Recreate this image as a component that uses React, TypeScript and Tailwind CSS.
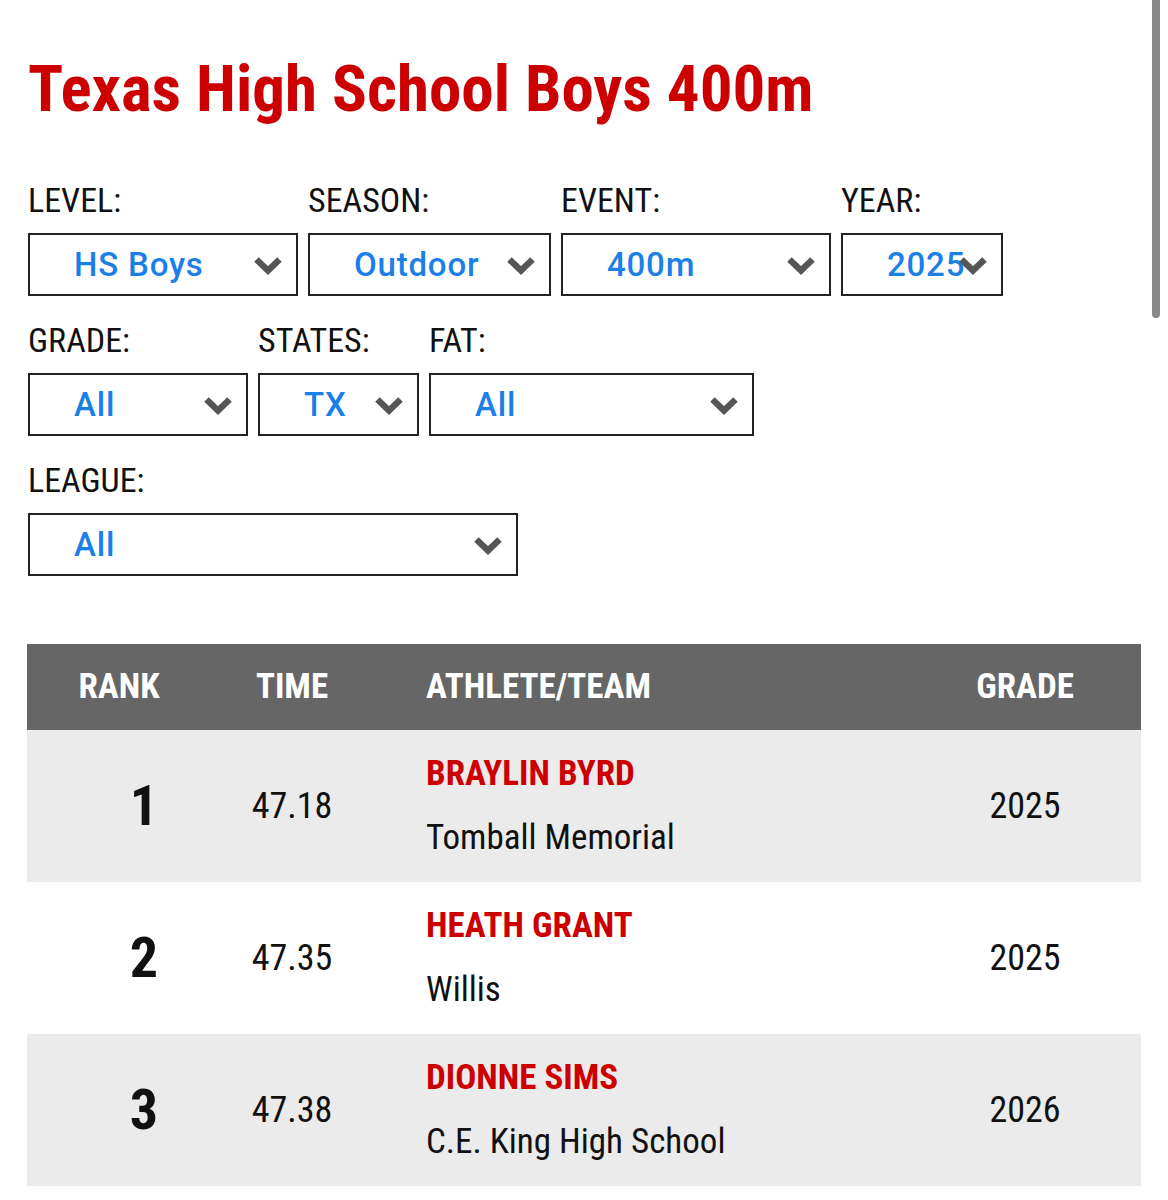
const rows = [
  { rank: 1, time: "47.18", name: "BRAYLIN BYRD", team: "Tomball Memorial", grade: "2025", shaded: true },
  { rank: 2, time: "47.35", name: "HEATH GRANT", team: "Willis", grade: "2025", shaded: false },
  { rank: 3, time: "47.38", name: "DIONNE SIMS", team: "C.E. King High School", grade: "2026", shaded: true },
];

function Chevron() {
  return (
    <svg
      viewBox="0 0 30 20"
      className="absolute right-[13px] top-1/2 h-[20px] w-[30px] -translate-y-1/2"
      aria-hidden
    >
      <path d="M3.5 4.5 L15 15.5 L26.5 4.5" fill="none" stroke="#555555" strokeWidth="6.5" strokeLinejoin="miter" />
    </svg>
  );
}

function Field({ label, value, width }: { label: string; value: string; width: string }) {
  return (
    <div className={`flex flex-col ${width}`}>
      <span className="text-[34px] font-normal leading-[40px] text-[#111]">{label}</span>
      <div className="relative mt-[13px] flex h-[63px] items-center border-[2.5px] border-[#222] bg-white pl-[44px]">
        <span className="font-['Roboto',sans-serif] text-[33px] font-medium tracking-[0.8px] text-[#1a7fe8] [font-stretch:100%]">
          {value}
        </span>
        <Chevron />
      </div>
    </div>
  );
}

export default function App() {
  return (
    <div className="relative min-h-[1200px] bg-white font-['Roboto_Condensed','Roboto',sans-serif] [font-stretch:75%]">
      <div className="absolute right-[8px] top-0 h-[318px] w-[8px] rounded-b-full bg-[#888888]" />

      <main className="px-[27px] pt-[57px]">
        <h1 className="pl-px text-[65px] font-bold leading-none text-[#cc0000]">
          Texas High School Boys 400m
        </h1>

        <div className="mt-[58px] flex flex-col gap-[24px] pl-px">
          <div className="flex gap-[10px]">
            <Field label="LEVEL:" value="HS Boys" width="w-[270px]" />
            <Field label="SEASON:" value="Outdoor" width="w-[243px]" />
            <Field label="EVENT:" value="400m" width="w-[270px]" />
            <Field label="YEAR:" value="2025" width="w-[162px]" />
          </div>
          <div className="flex gap-[10px]">
            <Field label="GRADE:" value="All" width="w-[220px]" />
            <Field label="STATES:" value="TX" width="w-[161px]" />
            <Field label="FAT:" value="All" width="w-[325px]" />
          </div>
          <div className="flex">
            <Field label="LEAGUE:" value="All" width="w-[490px]" />
          </div>
        </div>

        <section className="mt-[68px]">
          <div className="grid h-[86px] grid-cols-[184px_162px_1fr_232px] items-center bg-[#666666] text-[35px] font-bold text-white">
            <span className="text-center">RANK</span>
            <span className="text-center">TIME</span>
            <span className="pl-[53px]">ATHLETE/TEAM</span>
            <span className="text-center">GRADE</span>
          </div>
          {rows.map((r) => (
            <div
              key={r.rank}
              className={`grid h-[152px] grid-cols-[184px_162px_1fr_232px] items-center text-[36px] text-[#111] ${
                r.shaded ? "bg-[#ebebeb]" : "bg-white"
              }`}
            >
              <span className="pl-[50px] text-center text-[56px] font-bold leading-none">{r.rank}</span>
              <span className="text-center">{r.time}</span>
              <div className="flex flex-col pl-[53px] text-[35px]">
                <span className="font-bold leading-[64px] text-[#cc0000]">{r.name}</span>
                <span className="leading-[64px]">{r.team}</span>
              </div>
              <span className="text-center">{r.grade}</span>
            </div>
          ))}
        </section>
      </main>
    </div>
  );
}
